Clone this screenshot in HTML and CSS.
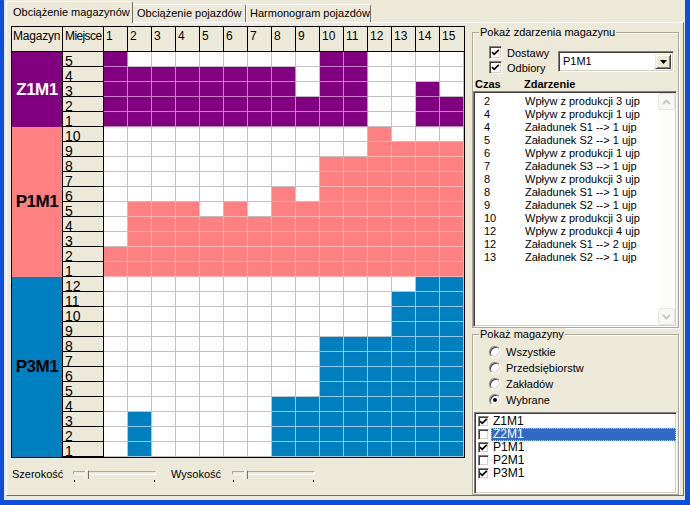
FILE: index.html
```html
<!DOCTYPE html>
<html>
<head>
    <meta charset="utf-8">
    <title>Obciążenie magazynów</title>
    <link rel="stylesheet" href="styles.css">
</head>
<body>
<div class="window">
    <div class="tabs">
        <div class="tab tab-1 active">Obciążenie magazynów</div>
        <div class="tab tab-2">Obciążenie pojazdów</div>
        <div class="tab tab-3">Harmonogram pojazdów</div>
    </div>

    <div class="page">
        <div class="main">
            <div class="grid" id="grid">
                <div class="head" id="grid-head">
                    <div class="hcell mag-head">Magazyn</div>
                    <div class="hcell place-head">Miejsce</div>
                </div>
            </div>

            <div class="sliders">
                <span class="sl-label">Szerokość</span>
                <div class="slider">
                    <div class="track"><span class="thumb"></span></div>
                    <div class="ticks"><i></i><i></i></div>
                </div>
                <span class="sl-label">Wysokość</span>
                <div class="slider">
                    <div class="track"><span class="thumb"></span></div>
                    <div class="ticks"><i></i><i></i></div>
                </div>
            </div>
        </div>

        <div class="side">
            <fieldset class="group events">
                <legend>Pokaż zdarzenia magazynu</legend>
                <div class="events-top">
                    <div class="checks">
                        <div class="check">
                            <span class="box"><svg width="9" height="9" viewBox="0 0 9 9"><path d="M1 4.2 L3.2 6.4 L7.8 1.8" fill="none" stroke="#000" stroke-width="1.7"/></svg></span>
                            Dostawy
                        </div>
                        <div class="check">
                            <span class="box"><svg width="9" height="9" viewBox="0 0 9 9"><path d="M1 4.2 L3.2 6.4 L7.8 1.8" fill="none" stroke="#000" stroke-width="1.7"/></svg></span>
                            Odbiory
                        </div>
                    </div>
                    <div class="combo">
                        <span class="combo-text">P1M1</span>
                        <span class="combo-btn"><svg width="7" height="4" viewBox="0 0 7 4"><path d="M0 0 H7 L3.5 4 Z" fill="#000"/></svg></span>
                    </div>
                </div>
                <div class="list-head"><span class="col-time">Czas</span><span>Zdarzenie</span></div>
                <div class="listbox">
                    <div class="list-items">
                        <div class="item"><span class="t">2</span>Wpływ z produkcji 3 ujp</div>
                        <div class="item"><span class="t">4</span>Wpływ z produkcji 1 ujp</div>
                        <div class="item"><span class="t">4</span>Załadunek S1 --&gt; 1 ujp</div>
                        <div class="item"><span class="t">5</span>Załadunek S2 --&gt; 1 ujp</div>
                        <div class="item"><span class="t">6</span>Wpływ z produkcji 1 ujp</div>
                        <div class="item"><span class="t">7</span>Załadunek S3 --&gt; 1 ujp</div>
                        <div class="item"><span class="t">8</span>Wpływ z produkcji 3 ujp</div>
                        <div class="item"><span class="t">8</span>Załadunek S1 --&gt; 1 ujp</div>
                        <div class="item"><span class="t">9</span>Załadunek S2 --&gt; 1 ujp</div>
                        <div class="item"><span class="t">10</span>Wpływ z produkcji 3 ujp</div>
                        <div class="item"><span class="t">12</span>Wpływ z produkcji 4 ujp</div>
                        <div class="item"><span class="t">12</span>Załadunek S1 --&gt; 2 ujp</div>
                        <div class="item"><span class="t">13</span>Załadunek S2 --&gt; 1 ujp</div>
                    </div>
                    <div class="scrollbar">
                        <span class="sb-btn"><svg width="9" height="6" viewBox="0 0 9 6"><path d="M1 5 L4.5 1.5 L8 5" fill="none" stroke="#c5c5bd" stroke-width="1.8"/></svg></span>
                        <span class="sb-btn"><svg width="9" height="6" viewBox="0 0 9 6"><path d="M1 1 L4.5 4.5 L8 1" fill="none" stroke="#c5c5bd" stroke-width="1.8"/></svg></span>
                    </div>
                </div>
            </fieldset>

            <fieldset class="group stores">
                <legend>Pokaż magazyny</legend>
                <div class="radios">
                    <div class="opt"><span class="radio"></span>Wszystkie</div>
                    <div class="opt"><span class="radio"></span>Przedsiębiorstw</div>
                    <div class="opt"><span class="radio"></span>Zakładów</div>
                    <div class="opt"><span class="radio on"></span>Wybrane</div>
                </div>
                <div class="checklist">
                    <div class="ci"><span class="cb"><svg width="9" height="9" viewBox="0 0 9 9"><path d="M1 4.2 L3.2 6.4 L7.8 1.8" fill="none" stroke="#000" stroke-width="1.7"/></svg></span><span class="ci-text">Z1M1</span></div>
                    <div class="ci"><span class="cb"></span><span class="ci-text selected">Z2M1</span></div>
                    <div class="ci"><span class="cb"><svg width="9" height="9" viewBox="0 0 9 9"><path d="M1 4.2 L3.2 6.4 L7.8 1.8" fill="none" stroke="#000" stroke-width="1.7"/></svg></span><span class="ci-text">P1M1</span></div>
                    <div class="ci"><span class="cb"></span><span class="ci-text">P2M1</span></div>
                    <div class="ci"><span class="cb"><svg width="9" height="9" viewBox="0 0 9 9"><path d="M1 4.2 L3.2 6.4 L7.8 1.8" fill="none" stroke="#000" stroke-width="1.7"/></svg></span><span class="ci-text">P3M1</span></div>
                </div>
            </fieldset>
        </div>
    </div>
</div>

<script>
    // fill level of each warehouse per time step 1..15
    const stores = [
        { name: 'Z1M1', cls: 'z1', rows: 5,  heights: [5, 4, 4, 4, 4, 4, 4, 4, 2, 5, 5, 0, 0, 3, 2] },
        { name: 'P1M1', cls: 'p1', rows: 10, heights: [2, 5, 5, 5, 4, 5, 4, 6, 5, 8, 8, 10, 9, 9, 9] },
        { name: 'P3M1', cls: 'p3', rows: 12, heights: [0, 3, 0, 0, 0, 0, 0, 4, 4, 8, 8, 8, 11, 12, 12] }
    ];

    const head = document.getElementById('grid-head');
    for (let c = 1; c <= 15; c++) {
        head.innerHTML += `<div class="hcell">${c}</div>`;
    }

    const grid = document.getElementById('grid');
    stores.forEach(s => {
        let rows = '';
        for (let level = s.rows; level >= 1; level--) {
            let cells = '';
            s.heights.forEach(h => {
                cells += `<div class="cell${h >= level ? ' on' : ''}"></div>`;
            });
            rows += `<div class="row"><div class="place">${level}</div>${cells}</div>`;
        }
        grid.innerHTML += `<div class="store ${s.cls}"><div class="mag">${s.name}</div><div class="rows">${rows}</div></div>`;
    });
</script>
</body>
</html>
```

FILE: styles.css
```css
* {
    box-sizing: border-box;
}
body {
    margin: 0;
    background: #ece9d8;
    font-family: "Liberation Sans", Arial, sans-serif;
    font-size: 11px;
    color: #000;
    overflow: hidden;
}
.window {
    width: 690px;
    height: 505px;
    display: flex;
    flex-direction: column;
    border-left: 4px solid #0b4fdc;
    border-right: 5px solid #0b4fdc;
    border-bottom: 5px solid #0b4fdc;
}

/* tabs */
.tabs {
    display: flex;
    align-items: flex-end;
    height: 22px;
    padding-left: 2px;
    position: relative;
    z-index: 1;
}
.tab {
    height: 18px;
    line-height: 17px;
    padding-left: 4px;
    white-space: nowrap;
    border-top: 1px solid #fff;
    border-right: 1px solid #716f64;
    border-radius: 2px 2px 0 0;
}
.tab-1 { width: 127px; }
.tab-2 { width: 113px; }
.tab-3 { width: 125px; border-left: 1px solid #fff; padding-left: 3px; }
.tab.active {
    height: 22px;
    line-height: 20px;
    margin-bottom: -1px;
    padding-left: 6px;
    background: #ece9d8;
    border-left: 1px solid #fff;
}

.page {
    flex: 1;
    display: flex;
    gap: 7px;
    margin: 0 1px 4px 2px;
    padding: 3px 3px 0 4px;
    border: 1px solid;
    border-color: #fff #716f64 #716f64 #fff;
    overflow: hidden;
}

/* grid */
.main {
    width: 454px;
    flex: none;
}
.grid {
    border: 1px solid #000;
    background: #fff;
}
.head {
    display: flex;
    height: 25px;
    border-bottom: 1px solid #000;
    background: #ece9d8;
}
.hcell {
    width: 24px;
    flex: none;
    border-right: 1px solid #000;
    font-size: 12px;
    line-height: 14px;
    padding: 2px 0 0 2px;
    white-space: nowrap;
}
.hcell:last-child {
    border-right: none;
}
.mag-head {
    width: 51px;
    padding-left: 1px;
    letter-spacing: -0.2px;
}
.place-head {
    width: 41px;
    letter-spacing: -0.6px;
}
.store {
    display: flex;
}
.mag {
    width: 51px;
    flex: none;
    display: flex;
    align-items: center;
    justify-content: center;
    border-right: 1px solid #000;
    font-size: 17px;
    font-weight: bold;
    letter-spacing: -0.5px;
}
.row {
    display: flex;
    height: 15px;
}
.place {
    width: 41px;
    flex: none;
    display: flex;
    align-items: flex-end;
    background: #ece9d8;
    border-right: 1px solid #000;
    border-bottom: 1px solid #000;
    font-size: 14px;
    line-height: 10px;
    padding-left: 2px;
}
.cell {
    width: 24px;
    flex: none;
    border-right: 1px solid #c0c0c0;
    border-bottom: 1px solid #c0c0c0;
}
.z1 .mag { background: #800080; color: #fff; }
.z1 .cell.on { background: #800080; border-color: #c880c8; }
.p1 .mag { background: #ff8080; }
.p1 .cell.on { background: #ff8080; border-color: #f8b4b4; }
.p3 .mag { background: #0080c0; }
.p3 .cell.on { background: #0080c0; border-color: #98c8e4; }

/* sliders */
.sliders {
    display: flex;
    margin-top: 10px;
    padding-left: 1px;
}
.sl-label {
    width: 61px;
    line-height: 13px;
}
.slider {
    width: 83px;
    margin-right: 15px;
    padding-top: 3px;
}
.track {
    height: 4px;
    position: relative;
    border: 1px solid;
    border-color: #aca899 #fff #fff #aca899;
}
.thumb {
    position: absolute;
    left: 11px;
    top: -2px;
    width: 4px;
    height: 9px;
    background: #ece9d8;
    border-left: 1px solid #fff;
    border-top: 1px solid #fff;
    border-right: 1px solid #716f64;
}
.ticks {
    display: flex;
    justify-content: space-between;
    margin-top: 5px;
    padding: 0 1px;
}
.ticks i {
    width: 1px;
    height: 2px;
    background: #000;
}

/* right panel */
.side {
    width: 207px;
    flex: none;
    display: flex;
    flex-direction: column;
}
fieldset.group {
    margin: 0;
    padding: 0;
    min-width: 0;
    border: 1px solid #aca899;
    box-shadow: inset 1px 1px 0 #fff, 1px 1px 0 #fff;
}
legend {
    margin-left: 6px;
    padding: 0 1px;
    line-height: 13px;
    background: #ece9d8;
}
.events-top {
    display: flex;
    height: 39px;
    padding: 7px 0 0 16px;
}
.checks {
    display: flex;
    flex-direction: column;
    gap: 2px;
}
.check {
    display: flex;
    align-items: center;
    gap: 5px;
    height: 13px;
}
.box, .cb {
    width: 13px;
    height: 13px;
    flex: none;
    display: flex;
    align-items: center;
    justify-content: center;
    background: #fff;
    border: 1px solid;
    border-color: #808080 #fff #fff #808080;
    box-shadow: inset 1px 1px 0 #404040, inset -1px -1px 0 #d4d0c8;
}
.combo {
    display: flex;
    width: 116px;
    height: 21px;
    margin: 5px 4px 0 auto;
    background: #fff;
    border: 1px solid;
    border-color: #808080 #fff #fff #808080;
    box-shadow: inset 1px 1px 0 #404040, inset -1px -1px 0 #d4d0c8;
    padding: 2px;
}
.combo-text {
    flex: 1;
    line-height: 15px;
    padding-left: 2px;
}
.combo-btn {
    width: 16px;
    display: flex;
    align-items: center;
    justify-content: center;
    background: #ece9d8;
    border: 1px solid;
    border-color: #ece9d8 #404040 #404040 #ece9d8;
    box-shadow: inset 1px 1px 0 #fff, inset -1px -1px 0 #808080;
}
.list-head {
    display: flex;
    height: 13px;
    line-height: 13px;
    padding-left: 2px;
    font-weight: bold;
}
.col-time {
    width: 49px;
}
.listbox {
    display: flex;
    height: 236px;
    margin-right: 1px;
    padding: 1px;
    background: #fff;
    border: 1px solid;
    border-color: #808080 #fff #fff #808080;
    box-shadow: inset 1px 1px 0 #404040, inset -1px -1px 0 #d4d0c8;
}
.list-items {
    flex: 1;
    padding: 2px 0 0 9px;
}
.item {
    display: flex;
    height: 13px;
    line-height: 13px;
    white-space: nowrap;
}
.item .t {
    width: 41px;
}
.scrollbar {
    width: 17px;
    display: flex;
    flex-direction: column;
    justify-content: space-between;
    background: #fcfcfa;
}
.sb-btn {
    height: 17px;
    display: flex;
    align-items: center;
    justify-content: center;
    background: #f7f7f3;
    border: 1px solid #e4e3dc;
    border-radius: 3px;
}
.stores {
    flex: 1;
}
.radios {
    padding: 3px 0 0 16px;
}
.opt {
    display: flex;
    align-items: center;
    gap: 5px;
    height: 16px;
}
.radio {
    width: 12px;
    height: 12px;
    display: flex;
    align-items: center;
    justify-content: center;
    border-radius: 50%;
    background: #fff;
    border: 1px solid;
    border-color: #808080 #fff #fff #808080;
    box-shadow: inset 1px 1px 0 #404040, inset -1px -1px 0 #d4d0c8;
}
.radio.on::after {
    content: "";
    width: 4px;
    height: 4px;
    border-radius: 50%;
    background: #000;
}
.checklist {
    height: 82px;
    margin: 4px 1px 0 1px;
    padding: 2px 0 0 3px;
    background: #fff;
    border: 1px solid;
    border-color: #808080 #fff #fff #808080;
    box-shadow: inset 1px 1px 0 #404040, inset -1px -1px 0 #d4d0c8;
}
.ci {
    display: flex;
    align-items: center;
    height: 13px;
}
.cb {
    width: 11px;
    height: 11px;
    margin-right: 2px;
}
.ci-text {
    flex: 1;
    height: 13px;
    line-height: 13px;
    padding-left: 2px;
    font-size: 12px;
}
.ci-text.selected {
    background: #316ac5;
    color: #fff;
    outline: 1px dotted #c8c8c8;
    outline-offset: -1px;
}
```
